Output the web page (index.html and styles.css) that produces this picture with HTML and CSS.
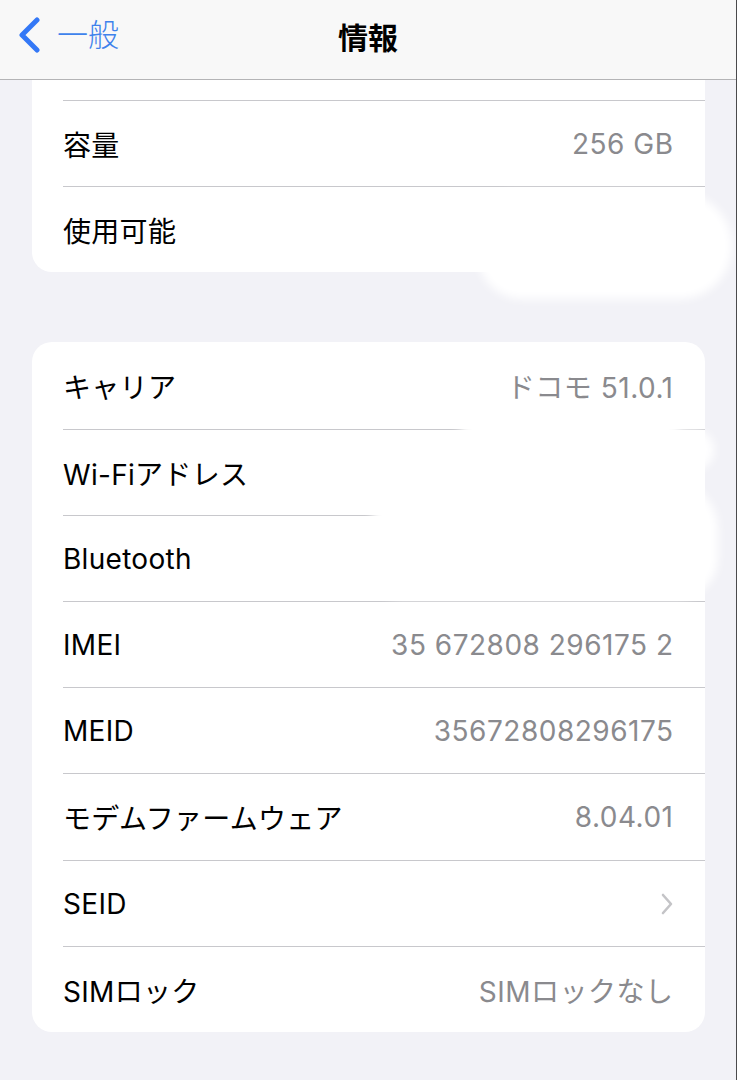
FILE: index.html
```html
<!DOCTYPE html>
<html lang="ja">
<head>
    <meta charset="UTF-8">
    <title>情報</title>
    <link rel="stylesheet" href="styles.css">
</head>
<body>
    <div class="screen">
        <header class="navbar">
            <a class="back" href="#">
                <svg class="back-icon" width="24" height="36" viewBox="0 0 24 36">
                    <path d="M20 3 L5 18 L20 33" fill="none" stroke="#3478f6" stroke-width="5" stroke-linecap="round" stroke-linejoin="round"/>
                </svg>
                <span>一般</span>
            </a>
            <h1 class="title">情報</h1>
        </header>

        <div class="content">
            <!-- storage group, top row scrolled under the bar -->
            <div class="group group-cut">
                <div class="cut-row"></div>
                <div class="row">
                    <span class="label">容量</span>
                    <span class="value">256 GB</span>
                </div>
                <div class="row">
                    <span class="label">使用可能</span>
                    <span class="value"></span>
                </div>
            </div>

            <div class="group">
                <div class="row">
                    <span class="label">キャリア</span>
                    <span class="value">ドコモ 51.0.1</span>
                </div>
                <div class="row">
                    <span class="label">Wi-Fiアドレス</span>
                    <span class="value"></span>
                </div>
                <div class="row">
                    <span class="label">Bluetooth</span>
                    <span class="value"></span>
                </div>
                <div class="row">
                    <span class="label">IMEI</span>
                    <span class="value">35 672808 296175 2</span>
                </div>
                <div class="row">
                    <span class="label">MEID</span>
                    <span class="value">35672808296175</span>
                </div>
                <div class="row">
                    <span class="label">モデムファームウェア</span>
                    <span class="value">8.04.01</span>
                </div>
                <div class="row">
                    <span class="label">SEID</span>
                    <svg class="chevron" width="14" height="24" viewBox="0 0 14 24">
                        <path d="M3 3 L11 12 L3 21" fill="none" stroke="#c4c4c7" stroke-width="2.6" stroke-linecap="round" stroke-linejoin="round"/>
                    </svg>
                </div>
                <div class="row">
                    <span class="label">SIMロック</span>
                    <span class="value">SIMロックなし</span>
                </div>
            </div>

            <!-- white smudges hiding private values -->
            <div class="smudge smudge-available"></div>
            <div class="smudge smudge-wifi"></div>
            <div class="smudge smudge-wifi-edge"></div>
            <div class="smudge smudge-bt"></div>
        </div>
    </div>
</body>
</html>
```

FILE: styles.css
```css
body {
    margin: 0;
    padding: 0;
    background-color: #f2f2f7;
    font-family: Inter, "Noto Sans CJK JP", sans-serif;
}
.screen {
    width: 736px;
    height: 1080px;
    border-right: 1px solid #4a4a4c;
    overflow: hidden;
    background-color: #f2f2f7;
}
.navbar {
    height: 79px;
    border-bottom: 1px solid #b4b4b6;
    background-color: #f8f8f8;
    display: flex;
    align-items: center;
    justify-content: center;
    position: relative;
}
.back {
    position: absolute;
    left: 17px;
    top: 17px;
    display: flex;
    align-items: center;
    gap: 16px;
    color: #3f82ec;
    text-decoration: none;
    font-size: 31px;
    font-weight: 300;
}
.back span {
    line-height: 36px;
}
.title {
    margin: 0;
    font-size: 30px;
    font-weight: 700;
    color: #000;
    padding-bottom: 8px;
}
.content {
    position: relative;
    padding: 0 31px 0 32px;
}
.group {
    background-color: #fff;
    border-radius: 20px;
    margin-top: 70px;
}
.group-cut {
    margin-top: 0;
    border-radius: 0 0 20px 20px;
}
.cut-row {
    height: 20px;
}
.row {
    box-sizing: border-box;
    height: 86.2px;
    margin-left: 31px;
    padding-right: 32px;
    border-top: 1px solid #c8c8cc;
    display: flex;
    align-items: center;
    justify-content: space-between;
    font-size: 28px;
    padding-top: 1px;
}
.group > .row:first-child {
    border-top: none;
}
.label {
    color: #000;
    letter-spacing: 0.3px;
}
.value {
    color: #8a8a8e;
    letter-spacing: 0.5px;
    margin-right: -0.5px;
}
.chevron {
    display: block;
    margin-right: -1px;
}
.smudge {
    position: absolute;
    background-color: #fff;
    filter: blur(5px);
}
.smudge-available {
    left: 478px;
    top: 113px;
    width: 254px;
    height: 106px;
    border-radius: 40px 60px 60px 50px;
}
.smudge-wifi {
    left: 458px;
    top: 332px;
    width: 225px;
    height: 100px;
    border-radius: 30px;
}
.smudge-wifi-edge {
    left: 660px;
    top: 350px;
    width: 54px;
    height: 40px;
    border-radius: 20px;
}
.smudge-bt {
    left: 372px;
    top: 400px;
    width: 346px;
    height: 118px;
    border-radius: 40px 50px 40px 30px;
}
```
